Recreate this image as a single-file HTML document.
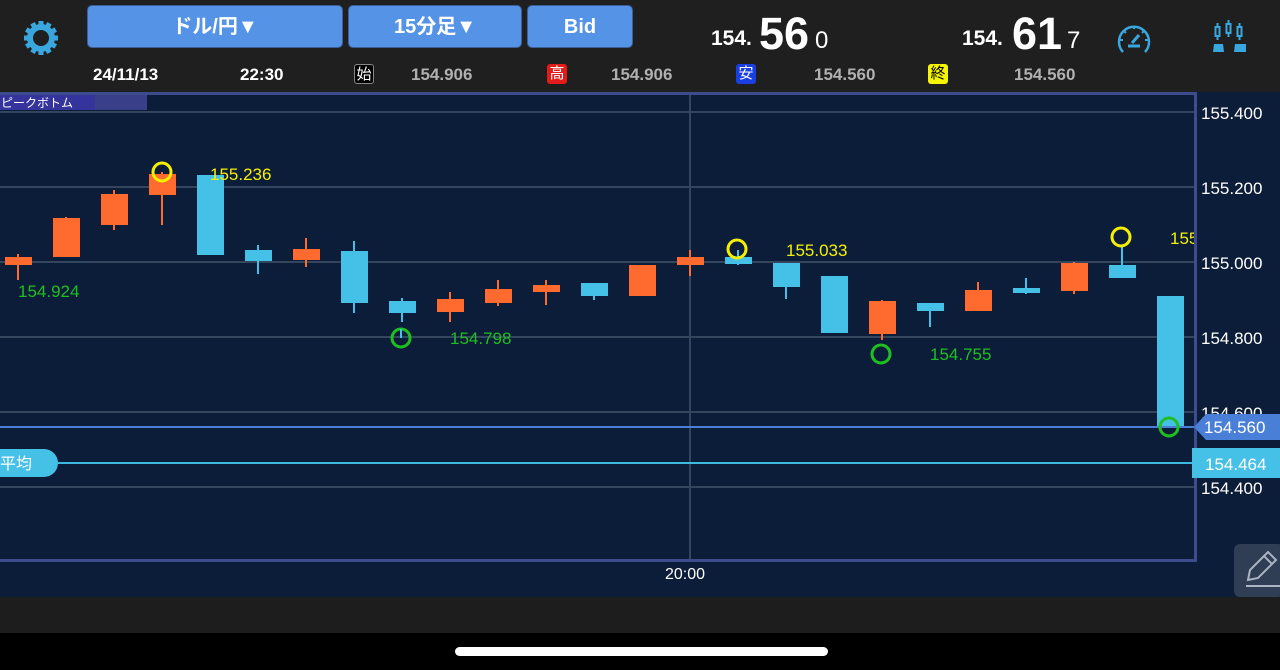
<!DOCTYPE html>
<html><head><meta charset="utf-8">
<style>
*{margin:0;padding:0;box-sizing:border-box}
body{width:1280px;height:670px;background:#000;overflow:hidden;font-family:"Liberation Sans","Noto Sans CJK JP",sans-serif;position:relative}
.top{position:absolute;left:0;top:0;width:1280px;height:92px;background:#1f1f1f}
.btn{position:absolute;top:5px;height:43px;background:#5593e6;border:1px solid #3c5f99;border-radius:5px;color:#fff;font-size:20px;font-weight:bold;text-align:center;line-height:42px}
.info{position:absolute;top:65px;font-size:17px;font-weight:bold;color:#fff}
.gv{color:#b0b0b0;font-weight:bold}
.badge{position:absolute;top:64px;width:20px;height:20px;border-radius:3px;font-size:15px;text-align:center;line-height:20px}
.price{position:absolute;top:10px;color:#fff;font-weight:bold}
.bot1{position:absolute;left:0;top:597px;width:1280px;height:36px;background:#1d1d1d}
.home{position:absolute;left:455px;top:647px;width:373px;height:9px;border-radius:5px;background:#fff}
</style></head><body>
<div class="top">
<svg style="position:absolute;left:21px;top:18px" width="40" height="40" viewBox="-20 -20 40 40">
<g fill="#39a7dd">
<circle r="14"/>
<g id="t"><rect x="-2.5" y="-17" width="5" height="6"/></g>
<use href="#t" transform="rotate(30)"/><use href="#t" transform="rotate(60)"/><use href="#t" transform="rotate(90)"/><use href="#t" transform="rotate(120)"/><use href="#t" transform="rotate(150)"/><use href="#t" transform="rotate(180)"/><use href="#t" transform="rotate(210)"/><use href="#t" transform="rotate(240)"/><use href="#t" transform="rotate(270)"/><use href="#t" transform="rotate(300)"/><use href="#t" transform="rotate(330)"/>
</g><circle r="8" fill="#1f1f1f"/></svg>
<div class="btn" style="left:87px;width:256px">ドル/円▼</div>
<div class="btn" style="left:348px;width:174px">15分足▼</div>
<div class="btn" style="left:527px;width:106px">Bid</div>
<div class="price" style="left:711px;top:27px;font-size:21px">154.</div>
<div class="price" style="left:759px;top:8px;font-size:45px">56</div>
<div class="price" style="left:815px;top:27px;font-size:24px;font-weight:normal">0</div>
<div class="price" style="left:962px;top:27px;font-size:21px">154.</div>
<div class="price" style="left:1012px;top:8px;font-size:45px">61</div>
<div class="price" style="left:1067px;top:27px;font-size:24px;font-weight:normal">7</div>
<svg style="position:absolute;left:1116px;top:21px" width="36" height="34" viewBox="0 0 36 34" fill="none" stroke="#39a7dd" stroke-width="2.5">
<path d="M7 31 A15 15 0 1 1 29 31"/>
<path d="M18 5v3M8 10l2 2M28 10l-2 2M4 19h3M32 19h-3" stroke-width="2"/>
<path d="M16 22 L23 14" stroke-width="3"/><path d="M12 25h12" stroke-width="3"/></svg>
<svg style="position:absolute;left:1212px;top:20px" width="36" height="34" viewBox="0 0 36 34" fill="#39a7dd" stroke="#39a7dd">
<g fill="none" stroke-width="2"><rect x="3.5" y="7" width="4" height="9"/><rect x="14.5" y="4" width="4" height="9"/><rect x="25.5" y="7" width="4" height="9"/></g>
<path d="M5.5 3v4M5.5 16v4M16.5 0v4M16.5 13v4M27.5 3v4M27.5 16v4" stroke-width="2"/>
<path d="M2 24h9l1 8H1z M23 24h11v8H22z" stroke="none"/></svg>
<div class="info" style="left:93px">24/11/13</div>
<div class="info" style="left:240px">22:30</div>
<div class="badge" style="left:354px;background:#000;border:1px solid #888;color:#fff">始</div>
<div class="info gv" style="left:411px">154.906</div>
<div class="badge" style="left:547px;background:#e21b1b;color:#fff">高</div>
<div class="info gv" style="left:611px">154.906</div>
<div class="badge" style="left:736px;background:#1a3fe0;color:#fff">安</div>
<div class="info gv" style="left:814px">154.560</div>
<div class="badge" style="left:928px;background:#f5f500;color:#000">終</div>
<div class="info gv" style="left:1014px">154.560</div>
</div>
<svg style="position:absolute;left:0;top:92px" width="1280" height="505" viewBox="0 92 1280 505">
<rect x="0" y="92" width="1280" height="505" fill="#0c1d3a"/>
<g stroke="#34465e" stroke-width="2">
<line x1="0" y1="112" x2="1195" y2="112"/><line x1="0" y1="187" x2="1195" y2="187"/><line x1="0" y1="262" x2="1195" y2="262"/><line x1="0" y1="337" x2="1195" y2="337"/><line x1="0" y1="412" x2="1195" y2="412"/><line x1="0" y1="487" x2="1195" y2="487"/>
<line x1="690" y1="94" x2="690" y2="560"/></g>
<rect x="0" y="94" width="147" height="16" fill="#3a3f8a"/><rect x="0" y="94" width="95" height="16" fill="#35339c"/>
<text x="1" y="107" fill="#fff" font-size="12">ピークボトム</text>
<g stroke-width="2">
<g stroke="#ff6a2e" fill="#ff6a2e">
<line x1="18" y1="254" x2="18" y2="280"/><rect x="6" y="258" width="25" height="6"/>
<line x1="66" y1="217" x2="66" y2="256"/><rect x="54" y="219" width="25" height="37"/>
<line x1="114" y1="190" x2="114" y2="230"/><rect x="102" y="195" width="25" height="29"/>
<line x1="162" y1="172" x2="162" y2="225"/><rect x="150" y="175" width="25" height="19"/>
<line x1="306" y1="238" x2="306" y2="267"/><rect x="294" y="250" width="25" height="9"/>
<line x1="450" y1="292" x2="450" y2="322"/><rect x="438" y="300" width="25" height="11"/>
<line x1="498" y1="280" x2="498" y2="306"/><rect x="486" y="290" width="25" height="12"/>
<line x1="546" y1="280" x2="546" y2="305"/><rect x="534" y="286" width="25" height="5"/>
<rect x="630" y="266" width="25" height="29"/>
<line x1="690" y1="250" x2="690" y2="276"/><rect x="678" y="258" width="25" height="6"/>
<line x1="882" y1="300" x2="882" y2="340"/><rect x="870" y="302" width="25" height="31"/>
<line x1="978" y1="282" x2="978" y2="311"/><rect x="966" y="291" width="25" height="19"/>
<line x1="1074" y1="262" x2="1074" y2="294"/><rect x="1062" y="264" width="25" height="26"/>
</g>
<g stroke="#45c0e6" fill="#45c0e6">
<rect x="198" y="176" width="25" height="78"/>
<line x1="258" y1="245" x2="258" y2="274"/><rect x="246" y="251" width="25" height="9"/>
<line x1="354" y1="241" x2="354" y2="313"/><rect x="342" y="252" width="25" height="50"/>
<line x1="402" y1="298" x2="402" y2="322"/><rect x="390" y="302" width="25" height="10"/>
<line x1="594" y1="283" x2="594" y2="300"/><rect x="582" y="284" width="25" height="11"/>
<line x1="738" y1="250" x2="738" y2="265"/><rect x="726" y="258" width="25" height="5"/>
<line x1="786" y1="263" x2="786" y2="299"/><rect x="774" y="264" width="25" height="22"/>
<rect x="822" y="277" width="25" height="55"/>
<line x1="930" y1="303" x2="930" y2="327"/><rect x="918" y="304" width="25" height="6"/>
<line x1="1026" y1="278" x2="1026" y2="294"/><rect x="1014" y="289" width="25" height="3"/>
<line x1="1122" y1="246" x2="1122" y2="277"/><rect x="1110" y="266" width="25" height="11"/>
<rect x="1158" y="297" width="25" height="130"/>
</g></g>
<line x1="0" y1="427" x2="1195" y2="427" stroke="#4a7fd8" stroke-width="2"/>
<line x1="0" y1="463" x2="1195" y2="463" stroke="#3fb8e0" stroke-width="2"/>
<path d="M0 449 H44 A14 14 0 0 1 44 477 H0Z" fill="#45c0e6"/>
<text x="0" y="469" fill="#fff" font-size="16">平均</text>
<g fill="none" stroke-width="3">
<circle cx="162" cy="172" r="9" stroke="#f5f000"/><circle cx="737" cy="249" r="9" stroke="#f5f000"/><circle cx="1121" cy="237" r="9" stroke="#f5f000"/>
<circle cx="401" cy="338" r="9" stroke="#1fbf1f"/><circle cx="881" cy="354" r="9" stroke="#1fbf1f"/><circle cx="1169" cy="427" r="9" stroke="#1fbf1f"/></g>
<line x1="401" y1="329" x2="401" y2="338" stroke="#45c0e6" stroke-width="2"/>
<g font-size="17">
<text x="210" y="180" fill="#f5f000">155.236</text>
<text x="786" y="256" fill="#f5f000">155.033</text>
<text x="1170" y="244" fill="#f5f000">155</text>
<text x="18" y="297" fill="#1fbf1f">154.924</text>
<text x="450" y="344" fill="#1fbf1f">154.798</text>
<text x="930" y="360" fill="#1fbf1f">154.755</text></g>
<rect x="1195" y="93" width="85" height="504" fill="#0c1d3a"/>
<path d="M0 93.5 H1195.5 V560.5 H0" fill="none" stroke="#3c4c8c" stroke-width="3"/>
<g font-size="17" fill="#fff">
<text x="1201" y="119">155.400</text><text x="1201" y="194">155.200</text><text x="1201" y="269">155.000</text><text x="1201" y="344">154.800</text><text x="1201" y="419">154.600</text><text x="1201" y="494">154.400</text></g>
<path d="M1194 427 L1206 414 H1280 V440 H1206Z" fill="#4a7fd8"/>
<text x="1204" y="433" fill="#fff" font-size="17">154.560</text>
<rect x="1192" y="448" width="88" height="30" fill="#45c0e6"/>
<text x="1205" y="470" fill="#fff" font-size="17">154.464</text>
<text x="665" y="579" fill="#fff" font-size="16">20:00</text>
<rect x="1234" y="544" width="50" height="53" rx="6" fill="#2f3d55"/>
<g fill="none" stroke="#aab4c2" stroke-width="2"><path d="M1248 580 L1250 570 L1268 552 L1276 560 L1258 578Z M1264 556 L1272 564"/><line x1="1246" y1="586" x2="1280" y2="586"/></g>
</svg>
<div class="bot1"></div>
<div class="home"></div>
</body></html>
